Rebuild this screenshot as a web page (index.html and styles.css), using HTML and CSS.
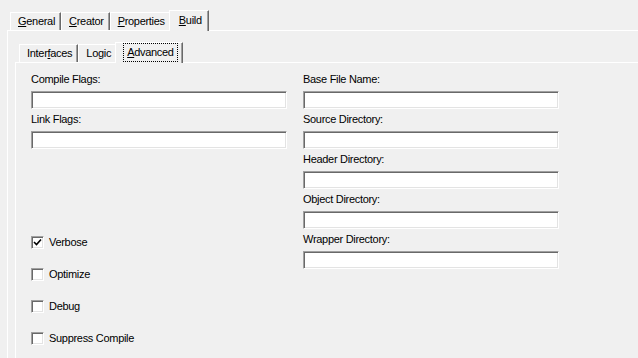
FILE: index.html
```html
<!DOCTYPE html>
<html>
<head>
<meta charset="utf-8">
<link rel="stylesheet" href="styles.css">
</head>
<body>
<div class="dialog">
  <div class="tabs outer-tabs">
    <div class="tab"><u>G</u>eneral</div>
    <div class="tab"><u>C</u>reator</div>
    <div class="tab"><u>P</u>roperties</div>
    <div class="tab selected"><u>B</u>uild</div>
  </div>
  <div class="panel outer-panel">
    <div class="tabs inner-tabs">
      <div class="tab">Inter<u>f</u>aces</div>
      <div class="tab">Logic</div>
      <div class="tab selected"><span class="focus"><u>A</u>dvanced</span></div>
    </div>
    <div class="panel inner-panel">
      <div class="form">
        <div class="col">
          <div class="field"><label>Compile Flags:</label><div class="input"></div></div>
          <div class="field"><label>Link Flags:</label><div class="input"></div></div>
          <div class="checks">
            <div class="check"><span class="box checked"><svg width="9" height="9" viewBox="0 0 9 9"><path d="M1 4 L3.5 6.5 L8 1.5" fill="none" stroke="#000" stroke-width="1.6"/></svg></span>Verbose</div>
            <div class="check"><span class="box"></span>Optimize</div>
            <div class="check"><span class="box"></span>Debug</div>
            <div class="check"><span class="box"></span>Suppress Compile</div>
          </div>
        </div>
        <div class="col">
          <div class="field"><label>Base File Name:</label><div class="input"></div></div>
          <div class="field"><label>Source Directory:</label><div class="input"></div></div>
          <div class="field"><label>Header Directory:</label><div class="input"></div></div>
          <div class="field"><label>Object Directory:</label><div class="input"></div></div>
          <div class="field"><label>Wrapper Directory:</label><div class="input"></div></div>
        </div>
      </div>
    </div>
  </div>
</div>
</body>
</html>
```

FILE: styles.css
```css
html, body {
  margin: 0;
  background: #f0f0f0;
}
body {
  font-family: "Liberation Sans", Arial, sans-serif;
  font-size: 11px;
  line-height: 13px;
  letter-spacing: -0.3px;
  color: #000;
  overflow: hidden;
  height: 358px;
}
u {
  text-decoration: underline;
  text-underline-offset: 1px;
}
.dialog {
  padding: 10px 0 0 7px;
}
.tabs {
  display: flex;
  align-items: flex-end;
}
.outer-tabs {
  padding-left: 3px;
}
.inner-tabs {
  padding-left: 4px;
}
.tab {
  box-sizing: border-box;
  height: 18px;
  padding: 0 5px 0 7px;
  display: flex;
  align-items: center;
  border-top: 1px solid #fff;
  border-left: 1px solid #fff;
  border-right: 1px solid #696969;
  box-shadow: inset -1px 0 #a0a0a0;
  white-space: nowrap;
}
.tab.selected {
  position: relative;
  height: 21px;
  margin: 0 -2px -1px -2px;
  padding: 0 6px 2px 9px;
  background: #f0f0f0;
}
.tab.selected + .tab {
  border-left: 0;
}
.focus {
  outline: 1px dotted #000;
  outline-offset: 1px;
  padding: 1px 2px;
}
.panel {
  border-top: 1px solid #fff;
  border-left: 1px solid #fff;
}
.outer-panel {
  padding: 11px 0 0 7px;
  height: 316px;
}
.inner-panel {
  padding: 10px 0 0 15px;
  height: 285px;
}
.form {
  display: flex;
  gap: 16px;
}
.col {
  width: 256px;
  display: flex;
  flex-direction: column;
  gap: 4px;
}
.field {
  display: flex;
  flex-direction: column;
  gap: 5px;
}
.input {
  height: 16px;
  background: #fff;
  border: 1px solid;
  border-color: #a0a0a0 #fff #fff #a0a0a0;
  box-shadow: inset 1px 1px #696969, inset -1px -1px #e3e3e3;
}
.checks {
  margin-top: 83px;
  display: flex;
  flex-direction: column;
  gap: 19px;
}
.check {
  display: flex;
  align-items: center;
  gap: 5px;
  height: 13px;
}
.box {
  width: 11px;
  height: 11px;
  background: #fff;
  border: 1px solid;
  border-color: #a0a0a0 #fff #fff #a0a0a0;
  box-shadow: inset 1px 1px #696969, inset -1px -1px #e3e3e3;
  display: flex;
  align-items: center;
  justify-content: center;
}
```
